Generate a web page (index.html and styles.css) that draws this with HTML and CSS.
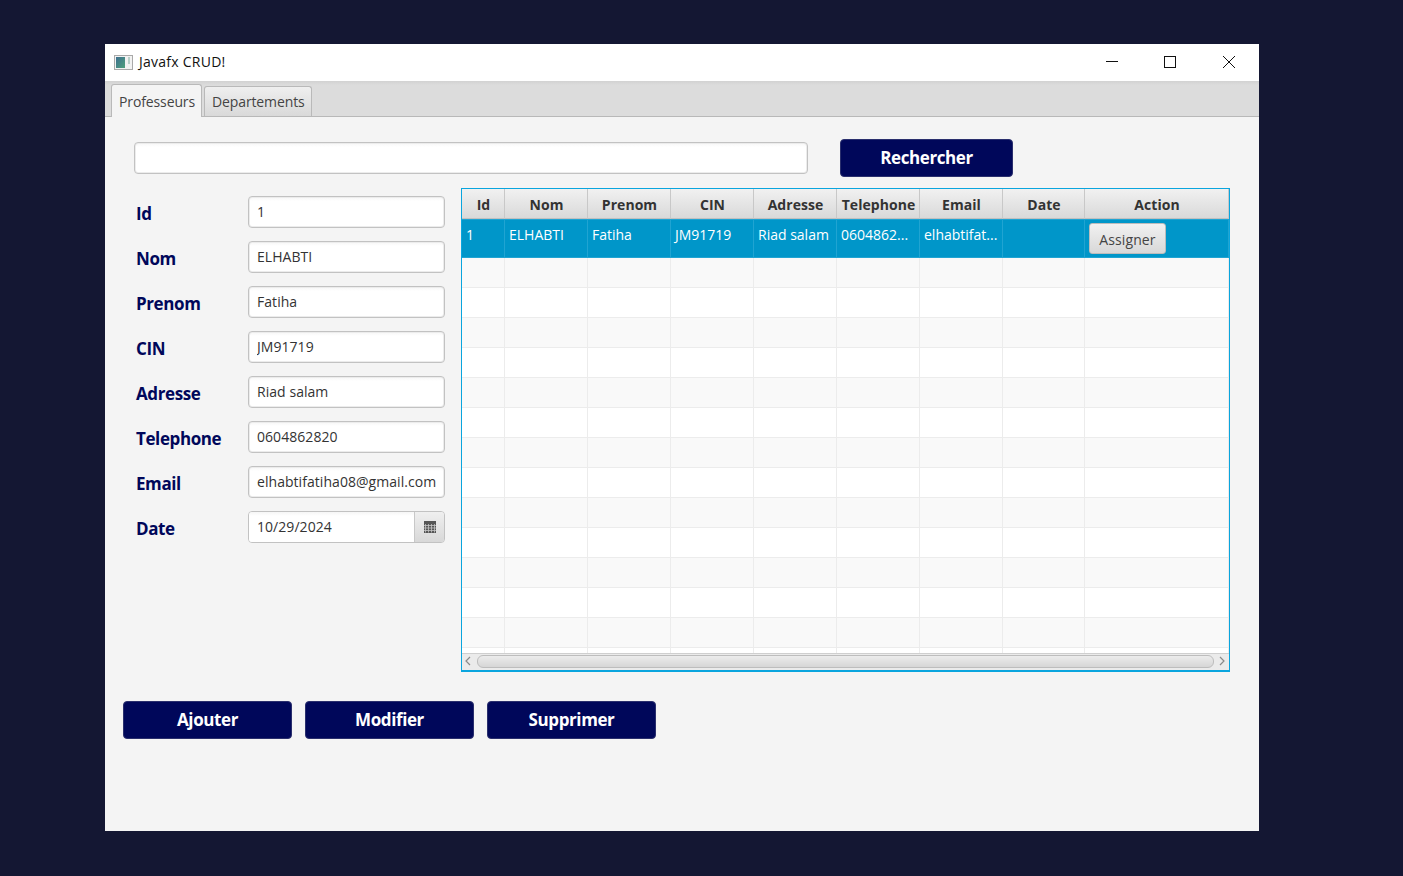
FILE: index.html
```html
<!DOCTYPE html>
<html>
<head>
<meta charset="utf-8">
<title>Javafx CRUD!</title>
<link rel="stylesheet" href="styles.css">
</head>
<body>
<div class="window">
  <div class="titlebar">
    <svg class="app-icon" width="20" height="16" viewBox="0 0 20 16">
      <defs>
        <linearGradient id="appgrad" x1="0" y1="0" x2="1" y2="1">
          <stop offset="0" stop-color="#3d6f8f"/>
          <stop offset="1" stop-color="#4fa07c"/>
        </linearGradient>
      </defs>
      <rect x="0.5" y="0.5" width="18" height="14" fill="#f2f2f2" stroke="#a9a9a9"/>
      <rect x="2" y="2" width="9" height="11" fill="url(#appgrad)"/>
      <rect x="14" y="2" width="2" height="7" fill="#b9cfc9"/>
    </svg>
    <span class="title-text">Javafx CRUD!</span>
    <div class="win-controls">
      <div class="win-btn">
        <svg width="14" height="14" viewBox="0 0 14 14"><path d="M1 6.5H13" stroke="#111" fill="none"/></svg>
      </div>
      <div class="win-btn">
        <svg width="14" height="14" viewBox="0 0 14 14"><rect x="1.5" y="1.5" width="11" height="11" stroke="#111" fill="none"/></svg>
      </div>
      <div class="win-btn">
        <svg width="14" height="14" viewBox="0 0 14 14"><path d="M1 1L13 13M13 1L1 13" stroke="#111" fill="none"/></svg>
      </div>
    </div>
  </div>

  <div class="tabs">
    <div class="tab tab-active">Professeurs</div>
    <div class="tab">Departements</div>
  </div>

  <div class="content">
    <div class="search-row">
      <input class="field search-input" type="text">
      <button class="btn btn-search">Rechercher</button>
    </div>

    <div class="main-row">
      <form class="prof-form">
        <label class="form-label">Id</label>
        <input class="field" type="text" value="1">
        <label class="form-label">Nom</label>
        <input class="field" type="text" value="ELHABTI">
        <label class="form-label">Prenom</label>
        <input class="field" type="text" value="Fatiha">
        <label class="form-label">CIN</label>
        <input class="field" type="text" value="JM91719">
        <label class="form-label">Adresse</label>
        <input class="field" type="text" value="Riad salam">
        <label class="form-label">Telephone</label>
        <input class="field" type="text" value="0604862820">
        <label class="form-label">Email</label>
        <input class="field" type="text" value="elhabtifatiha08@gmail.com">
        <label class="form-label">Date</label>
        <div class="date-picker">
          <input class="date-input" type="text" value="10/29/2024">
          <div class="date-btn">
            <svg width="12" height="12" viewBox="0 0 12 12">
              <rect width="12" height="12" fill="#555"/>
              <path d="M1.5 3V11.5M4.5 3V11.5M7.5 3V11.5M10.5 3V11.5M0 4.5H12M0 7H12M0 9.5H12" stroke="#c4c4c4" stroke-width="0.8" fill="none"/>
            </svg>
          </div>
        </div>
      </form>

      <div class="table-box">
        <div class="table-scroll">
          <table class="prof-table">
            <colgroup>
              <col class="col-id">
              <col class="col-std">
              <col class="col-std">
              <col class="col-std">
              <col class="col-std">
              <col class="col-std">
              <col class="col-std">
              <col class="col-date">
              <col>
            </colgroup>
            <thead>
              <tr>
                <th>Id</th><th>Nom</th><th>Prenom</th><th>CIN</th><th>Adresse</th><th>Telephone</th><th>Email</th><th>Date</th><th>Action</th>
              </tr>
            </thead>
            <tbody>
              <tr class="row-selected">
                <td>1</td><td>ELHABTI</td><td>Fatiha</td><td>JM91719</td><td>Riad salam</td><td>0604862...</td><td>elhabtifat...</td><td></td>
                <td class="cell-action"><button class="btn-assign">Assigner</button></td>
              </tr>
              <tr class="row-odd"><td></td><td></td><td></td><td></td><td></td><td></td><td></td><td></td><td></td></tr>
              <tr><td></td><td></td><td></td><td></td><td></td><td></td><td></td><td></td><td></td></tr>
              <tr class="row-odd"><td></td><td></td><td></td><td></td><td></td><td></td><td></td><td></td><td></td></tr>
              <tr><td></td><td></td><td></td><td></td><td></td><td></td><td></td><td></td><td></td></tr>
              <tr class="row-odd"><td></td><td></td><td></td><td></td><td></td><td></td><td></td><td></td><td></td></tr>
              <tr><td></td><td></td><td></td><td></td><td></td><td></td><td></td><td></td><td></td></tr>
              <tr class="row-odd"><td></td><td></td><td></td><td></td><td></td><td></td><td></td><td></td><td></td></tr>
              <tr><td></td><td></td><td></td><td></td><td></td><td></td><td></td><td></td><td></td></tr>
              <tr class="row-odd"><td></td><td></td><td></td><td></td><td></td><td></td><td></td><td></td><td></td></tr>
              <tr><td></td><td></td><td></td><td></td><td></td><td></td><td></td><td></td><td></td></tr>
              <tr class="row-odd"><td></td><td></td><td></td><td></td><td></td><td></td><td></td><td></td><td></td></tr>
              <tr><td></td><td></td><td></td><td></td><td></td><td></td><td></td><td></td><td></td></tr>
              <tr class="row-odd"><td></td><td></td><td></td><td></td><td></td><td></td><td></td><td></td><td></td></tr>
              <tr><td></td><td></td><td></td><td></td><td></td><td></td><td></td><td></td><td></td></tr>
            </tbody>
          </table>
        </div>
        <div class="hscroll">
          <svg class="arrow" width="14" height="14" viewBox="0 0 14 14"><path d="M8 3L4 7L8 11" stroke="#8a8a8a" stroke-width="1.2" fill="none"/></svg>
          <div class="thumb"></div>
          <svg class="arrow" width="14" height="14" viewBox="0 0 14 14"><path d="M5 3L9 7L5 11" stroke="#8a8a8a" stroke-width="1.2" fill="none"/></svg>
        </div>
      </div>
    </div>

    <div class="action-row">
      <button class="btn btn-action">Ajouter</button>
      <button class="btn btn-action">Modifier</button>
      <button class="btn btn-action">Supprimer</button>
    </div>
  </div>
</div>
</body>
</html>
```

FILE: styles.css
```css
* {
  box-sizing: border-box;
}
body {
  margin: 0;
  padding: 44px 0 0 105px;
  height: 876px;
  overflow: hidden;
  background-color: #141733;
  font-family: "Open Sans", "Noto Sans", sans-serif;
  font-size: 14px;
  color: #333;
}
.window {
  width: 1154px;
  height: 787px;
  display: flex;
  flex-direction: column;
  background-color: #f4f4f4;
}

/* title bar */
.titlebar {
  height: 37px;
  flex: none;
  display: flex;
  align-items: center;
  padding: 0 1px 2px 9px;
  background-color: #fff;
}
.app-icon {
  margin: 2px 5px 0 0;
}
.title-text {
  color: #111;
  font-size: 14px;
  letter-spacing: 0.25px;
}
.win-controls {
  display: flex;
  margin-left: auto;
}
.win-btn {
  width: 59px;
  height: 35px;
  display: flex;
  align-items: center;
  justify-content: center;
}
.win-btn:first-child {
  width: 57px;
}

/* tabs */
.tabs {
  height: 36px;
  flex: none;
  display: flex;
  align-items: flex-end;
  gap: 2px;
  padding-left: 6px;
  background: linear-gradient(#d2d2d2, #dcdcdc 4px);
  border-bottom: 1px solid #b8b8b8;
}
.tab {
  height: 30px;
  padding: 0 6px 0 7px;
  display: flex;
  align-items: center;
  border: 1px solid #b9b9b9;
  border-bottom: none;
  border-radius: 3px 3px 0 0;
  background: linear-gradient(#efefef, #d9d9d9);
  font-size: 14px;
  letter-spacing: -0.12px;
  color: #444;
}
.tab-active {
  height: 33px;
  margin-bottom: -1px;
  background: #f4f4f4;
}

.content {
  flex: 1;
  display: flex;
  flex-direction: column;
}
.search-row {
  display: flex;
  align-items: center;
  gap: 32px;
  padding: 22px 0 0 29px;
}
.search-input {
  width: 674px;
  height: 34px;
}
.field {
  height: 32px;
  padding: 0 8px 2px;
  border: 1px solid #c2c2c2;
  border-radius: 4px;
  box-shadow: inset 0 0 0 1px #ececec;
  background: linear-gradient(#f6f6f6, #fff 4px);
  font-family: inherit;
  font-size: 14px;
  letter-spacing: 0.05px;
  color: #333;
  outline: none;
}
.btn {
  padding: 0 0 2px;
  border: 1px solid #2a2f6d;
  border-radius: 4px;
  background-color: #00075a;
  color: #fff;
  font-family: inherit;
  font-weight: 700;
  font-size: 17px;
  letter-spacing: -0.4px;
}
.btn-search {
  width: 173px;
  height: 38px;
}

.main-row {
  display: flex;
  margin-top: 11px;
  padding-left: 31px;
}
.prof-form {
  width: 325px;
  flex: none;
  display: grid;
  grid-template-columns: 112px 197px;
  grid-auto-rows: 32px;
  row-gap: 13px;
  align-items: center;
  align-content: start;
  padding-top: 8px;
}
.form-label {
  padding-top: 2px;
  font-weight: 700;
  font-size: 17px;
  letter-spacing: -0.4px;
  color: #00075a;
}
.prof-form .field {
  width: 197px;
}
.date-picker {
  width: 197px;
  height: 32px;
  display: flex;
  border: 1px solid #c2c2c2;
  border-radius: 4px;
  overflow: hidden;
}
.date-input {
  flex: 1;
  min-width: 0;
  padding: 0 8px 2px;
  border: none;
  background: linear-gradient(#f6f6f6, #fff 4px);
  font-family: inherit;
  font-size: 14px;
  letter-spacing: 0.05px;
  color: #333;
  outline: none;
}
.date-btn {
  width: 30px;
  flex: none;
  display: flex;
  align-items: center;
  justify-content: center;
  border-left: 1px solid #c8c8c8;
  background: linear-gradient(#efefef, #d8d8d8);
}

/* table */
.table-box {
  width: 769px;
  height: 484px;
  display: flex;
  flex-direction: column;
  border: 1px solid #0aa5de;
  border-bottom-width: 2px;
  background-color: #fff;
}
.table-scroll {
  height: 464px;
  flex: none;
  overflow: hidden;
}
.prof-table {
  width: 100%;
  table-layout: fixed;
  border-collapse: separate;
  border-spacing: 0;
}
.col-id {
  width: 43px;
}
.col-std {
  width: 83px;
}
.col-date {
  width: 82px;
}
.prof-table th {
  height: 30px;
  padding: 1px 0 0 1px;
  border-right: 1px solid #c8c8c8;
  border-bottom: 1px solid #c0c0c0;
  background: linear-gradient(#f1f1f1, #d9d9d9);
  font-size: 14px;
  font-weight: 700;
  letter-spacing: 0.05px;
  color: #333;
}
.prof-table td {
  height: 30px;
  padding: 0;
  border-right: 1px solid #ececec;
  border-bottom: 1px solid #ececec;
}
.row-odd td {
  background-color: #f9f9f9;
}
.prof-table .row-selected td {
  height: 39px;
  padding: 0 0 9px 4px;
  border-top: 1px solid #20a4d2;
  border-right-color: #20a4d2;
  border-bottom-color: #20a4d2;
  background-color: #0096c9;
  color: #fff;
  font-size: 14px;
  white-space: nowrap;
  overflow: hidden;
}
.prof-table .row-selected .cell-action {
  padding: 0 0 0 4px;
}
.btn-assign {
  width: 77px;
  height: 31px;
  padding: 2px 0 0;
  display: block;
  border: 1px solid #bcbcbc;
  border-radius: 3px;
  background: linear-gradient(#f1f1f1, #d8d8d8);
  font-family: inherit;
  font-size: 14px;
  letter-spacing: 0.1px;
  color: #444;
}
.hscroll {
  flex: 1;
  display: flex;
  align-items: center;
  justify-content: space-between;
  padding-bottom: 2px;
  border-top: 1px solid #cfcfcf;
  background-color: #ebebeb;
}
.thumb {
  flex: 1;
  height: 13px;
  margin: 0 1px;
  border: 1px solid #bdbdbd;
  border-radius: 6px;
  background: linear-gradient(#ececec, #d6d6d6);
}

.action-row {
  display: flex;
  gap: 13px;
  margin-top: 29px;
  padding-left: 18px;
}
.btn-action {
  width: 169px;
  height: 38px;
}
```
